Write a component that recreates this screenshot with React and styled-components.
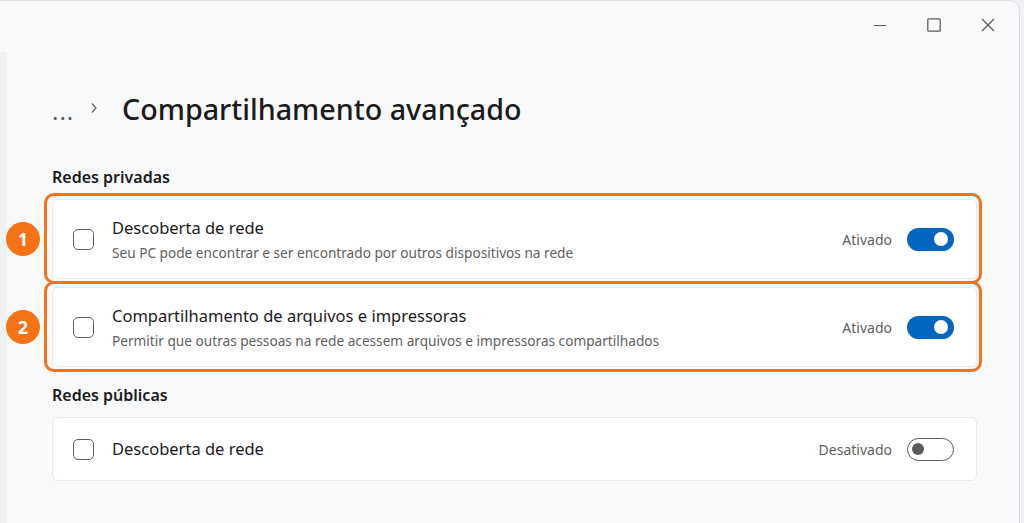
import React from "react";
import styled, { createGlobalStyle } from "styled-components";

const Global = createGlobalStyle`
  html, body { margin: 0; padding: 0; }
  body {
    background: #eef0f2;
    font-family: "Noto Sans", "Open Sans", sans-serif;
    width: 1024px;
    height: 523px;
    overflow: hidden;
  }
`;

const Window = styled.div`
  width: 1019px;
  height: 522px;
  background: #f8f9fb;
  border-top: 1px solid #e2e3e5;
  border-right: 1px solid #dcdde0;
  border-top-right-radius: 10px;
  display: flex;
  flex-direction: column;
  overflow: hidden;
`;

const TitleBar = styled.div`
  height: 51px;
  display: flex;
  justify-content: flex-end;
  padding-right: 4px;
`;

const CaptionButton = styled.div`
  width: 54px;
  height: 48px;
  display: flex;
  align-items: center;
  justify-content: center;
  color: #5c5c5c;
`;

const Body = styled.div`
  flex: 1;
  display: flex;
`;

const NavEdge = styled.div`
  width: 7px;
  background: #f0f1f3;
`;

const Content = styled.div`
  flex: 1;
  padding: 36px 42px 0 45px;
  display: flex;
  flex-direction: column;
`;

const Breadcrumb = styled.div`
  height: 40px;
  display: flex;
  align-items: center;
`;

const Dots = styled.span`
  font-size: 24px;
  color: #5f5f5f;
  letter-spacing: 1px;
  line-height: 1;
  margin-top: 6px;
  width: 38px;
`;

const Chevron = styled.span`
  width: 32px;
  display: flex;
  align-items: center;
  color: #6a6a6a;
`;

const Title = styled.h1`
  margin: 0;
  font-size: 28.7px;
  font-weight: 500;
  color: #1b1b1b;
`;

const SectionHeading = styled.h2`
  margin: ${(p) => p.$top}px 0 11px;
  font-size: 16px;
  line-height: 22px;
  font-weight: 600;
  color: #1b1b1b;
`;

const List = styled.div`
  display: flex;
  flex-direction: column;
  gap: 8px;
`;

const Highlight = styled.div`
  position: relative;
  &::after {
    content: "";
    position: absolute;
    top: -6px;
    bottom: -5px;
    left: -8px;
    right: -5px;
    border: 3px solid #f57316;
    border-radius: 10px;
    pointer-events: none;
  }
`;

const Badge = styled.div`
  position: absolute;
  left: -46px;
  top: 50%;
  transform: translateY(-50%);
  width: 34px;
  height: 34px;
  border-radius: 50%;
  background: #f57316;
  color: #fff;
  font-weight: 700;
  font-size: 18px;
  display: flex;
  align-items: center;
  justify-content: center;
`;

const Card = styled.div`
  height: ${(p) => p.$h}px;
  box-sizing: border-box;
  background: #ffffff;
  border: 1px solid #e8e9eb;
  border-radius: 6px;
  display: flex;
  align-items: center;
  padding: 0 22px 0 20px;
`;

const Check = styled.div`
  width: 19px;
  height: 19px;
  border: 1.6px solid #5e5e5e;
  border-radius: 5px;
  flex-shrink: 0;
  margin-right: 18px;
`;

const TextBlock = styled.div`
  flex: 1;
  display: flex;
  flex-direction: column;
`;

const ItemTitle = styled.div`
  font-size: 16.5px;
  line-height: 22px;
  color: #1b1b1b;
`;

const ItemDesc = styled.div`
  font-size: 13.65px;
  line-height: 18px;
  color: #5f5f5f;
  margin-top: 5px;
`;

const State = styled.span`
  font-size: 14px;
  color: #5f5f5f;
  margin-right: 15px;
`;

const Toggle = styled.div`
  width: 47px;
  height: 23px;
  box-sizing: border-box;
  border-radius: 12px;
  display: flex;
  align-items: center;
  background: ${(p) => (p.$on ? "#0067c0" : "transparent")};
  border: ${(p) => (p.$on ? "none" : "1.6px solid #5c5c5c")};
  justify-content: ${(p) => (p.$on ? "flex-end" : "flex-start")};
  padding: 0 ${(p) => (p.$on ? 6 : 4)}px;
`;

const Knob = styled.div`
  width: ${(p) => (p.$on ? 14 : 12)}px;
  height: ${(p) => (p.$on ? 14 : 12)}px;
  border-radius: 50%;
  background: ${(p) => (p.$on ? "#ffffff" : "#5c5c5c")};
`;

function Row({ title, desc, on, h }) {
  return (
    <Card $h={h}>
      <Check />
      <TextBlock>
        <ItemTitle>{title}</ItemTitle>
        {desc && <ItemDesc>{desc}</ItemDesc>}
      </TextBlock>
      <State>{on ? "Ativado" : "Desativado"}</State>
      <Toggle $on={on}>
        <Knob $on={on} />
      </Toggle>
    </Card>
  );
}

export default function App() {
  return (
    <>
      <Global />
      <Window>
        <TitleBar>
          <CaptionButton>
            <svg width="14" height="14" viewBox="0 0 14 14">
              <path d="M0.5 7.5h13" stroke="currentColor" strokeWidth="1.2" />
            </svg>
          </CaptionButton>
          <CaptionButton>
            <svg width="14" height="14" viewBox="0 0 14 14">
              <rect x="0.8" y="0.8" width="12.4" height="12.4" rx="1" fill="none" stroke="currentColor" strokeWidth="1.3" />
            </svg>
          </CaptionButton>
          <CaptionButton>
            <svg width="14" height="14" viewBox="0 0 14 14">
              <path d="M1 1L13 13M13 1L1 13" stroke="currentColor" strokeWidth="1.3" />
            </svg>
          </CaptionButton>
        </TitleBar>
        <Body>
          <NavEdge />
          <Content>
            <Breadcrumb>
              <Dots>...</Dots>
              <Chevron>
                <svg width="8" height="12" viewBox="0 0 8 12">
                  <path d="M2 1.5L6 6L2 10.5" fill="none" stroke="currentColor" strokeWidth="1.3" />
                </svg>
              </Chevron>
              <Title>Compartilhamento avançado</Title>
            </Breadcrumb>
            <SectionHeading $top={38}>Redes privadas</SectionHeading>
            <List>
              <Highlight>
                <Badge>1</Badge>
                <Row
                  h={80}
                  on
                  title="Descoberta de rede"
                  desc="Seu PC pode encontrar e ser encontrado por outros dispositivos na rede"
                />
              </Highlight>
              <Highlight>
                <Badge>2</Badge>
                <Row
                  h={80}
                  on
                  title="Compartilhamento de arquivos e impressoras"
                  desc="Permitir que outras pessoas na rede acessem arquivos e impressoras compartilhados"
                />
              </Highlight>
            </List>
            <SectionHeading $top={17}>Redes públicas</SectionHeading>
            <List>
              <Row h={64} on={false} title="Descoberta de rede" />
            </List>
          </Content>
        </Body>
      </Window>
    </>
  );
}
